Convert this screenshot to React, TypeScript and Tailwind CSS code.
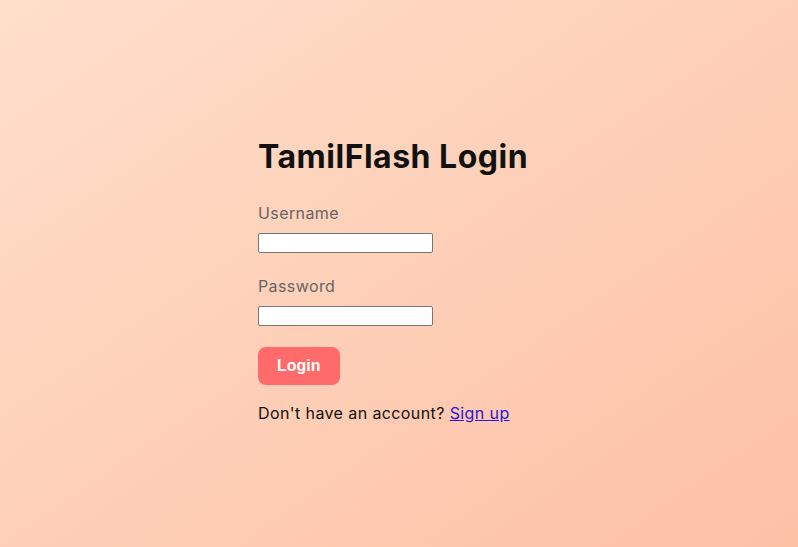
import React from "react";

export default function App() {
  return (
    <div className="min-h-screen w-full flex items-center justify-center bg-gradient-to-br from-[#ffdfca] to-[#fcc0a5]" style={{ fontFamily: "Inter, 'Open Sans', sans-serif" }}>
      <div className="w-[282px] pt-[11px] flex flex-col items-start">
        <h1 className="text-[32px] leading-[48px] font-bold text-[#111] tracking-[0.5px] mb-[20px]">TamilFlash Login</h1>
        <label className="text-[16px] leading-[24px] text-[#666] tracking-[0.4px] mb-[8px]">Username</label>
        <input type="text" className="w-[175px] h-[20px] bg-white border border-[#767676] rounded-[2px] mb-[21px]" />
        <label className="text-[16px] leading-[24px] text-[#666] tracking-[0.4px] mb-[8px]">Password</label>
        <input type="password" className="w-[175px] h-[20px] bg-white border border-[#767676] rounded-[2px] mb-[21px]" />
        <button className="h-[38px] px-[19px] bg-[#ff6b6b] text-white rounded-[8px] text-[16px] font-bold mb-[16px]" style={{ fontFamily: "'Liberation Sans', Arial, sans-serif" }}>Login</button>
        <p className="text-[16px] leading-[24px] text-[#111] tracking-[0.4px]">
          Don't have an account? <a href="#" className="text-[#2a14d6] underline">Sign up</a>
        </p>
      </div>
    </div>
  );
}
